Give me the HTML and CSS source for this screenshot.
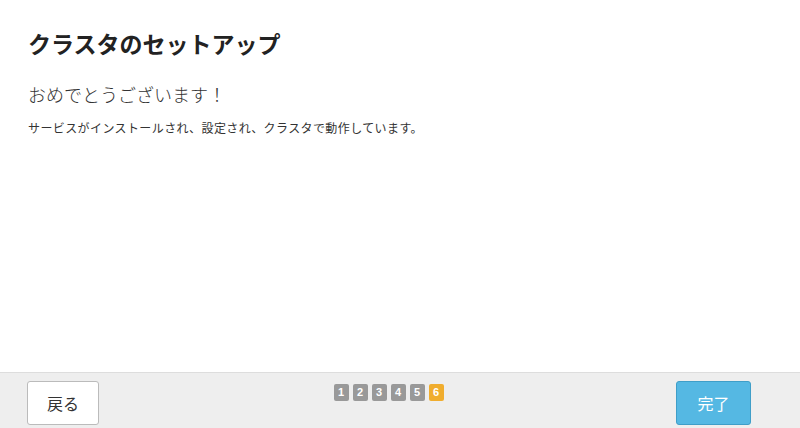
FILE: index.html
```html
<!DOCTYPE html>
<html lang="ja">
<head>
    <meta charset="UTF-8">
    <title>クラスタのセットアップ</title>
    <link rel="stylesheet" href="styles.css">
</head>
<body>
    <div class="wizard">
        <div class="content">
            <h2>クラスタのセットアップ</h2>
            <h4>おめでとうございます！</h4>
            <p>サービスがインストールされ、設定され、クラスタで動作しています。</p>
        </div>
        <div class="footer">
            <button class="btn">戻る</button>
            <div class="steps">
                <span class="step">1</span>
                <span class="step">2</span>
                <span class="step">3</span>
                <span class="step">4</span>
                <span class="step">5</span>
                <span class="step current">6</span>
            </div>
            <button class="btn primary">完了</button>
        </div>
    </div>
</body>
</html>
```
FILE: styles.css
```css
body {
    margin: 0;
    font-family: "Liberation Sans", "Noto Sans CJK JP", sans-serif;
    color: #333;
    background: #fff;
}
.wizard {
    height: 428px;
    display: flex;
    flex-direction: column;
}
.content {
    flex: 1;
    padding: 28px 28px 0;
}
h2 {
    margin: 0;
    font-size: 23px;
    line-height: 34px;
    font-weight: bold;
    color: #222;
}
h4 {
    margin: 21px 0 0;
    font-size: 18px;
    font-weight: 300;
    line-height: 26px;
    color: #333;
}
p {
    margin: 11px 0 0;
    font-size: 12px;
    letter-spacing: 0.4px;
    line-height: 18px;
}
.footer {
    box-sizing: border-box;
    height: 56px;
    border-top: 1px solid #ddd;
    background: #eee;
    display: flex;
    align-items: flex-start;
    justify-content: space-between;
    padding: 8px 49px 0 27px;
}
.btn {
    width: 72px;
    height: 44px;
    border: 1px solid #bbb;
    border-radius: 3px;
    background: #fff;
    font-family: inherit;
    font-size: 16px;
    color: #333;
}
.btn.primary {
    width: 75px;
    background: #55b8e3;
    border-color: #3f9ec8;
    color: #fff;
}
.steps {
    display: flex;
    gap: 4px;
    margin-top: 3px;
    margin-left: 2px;
}
.step {
    width: 15px;
    height: 17px;
    border-radius: 2px;
    background: #999;
    color: #fff;
    font-size: 11px;
    font-weight: bold;
    line-height: 17px;
    text-align: center;
}
.step.current {
    background: #f0ad2e;
}
```
